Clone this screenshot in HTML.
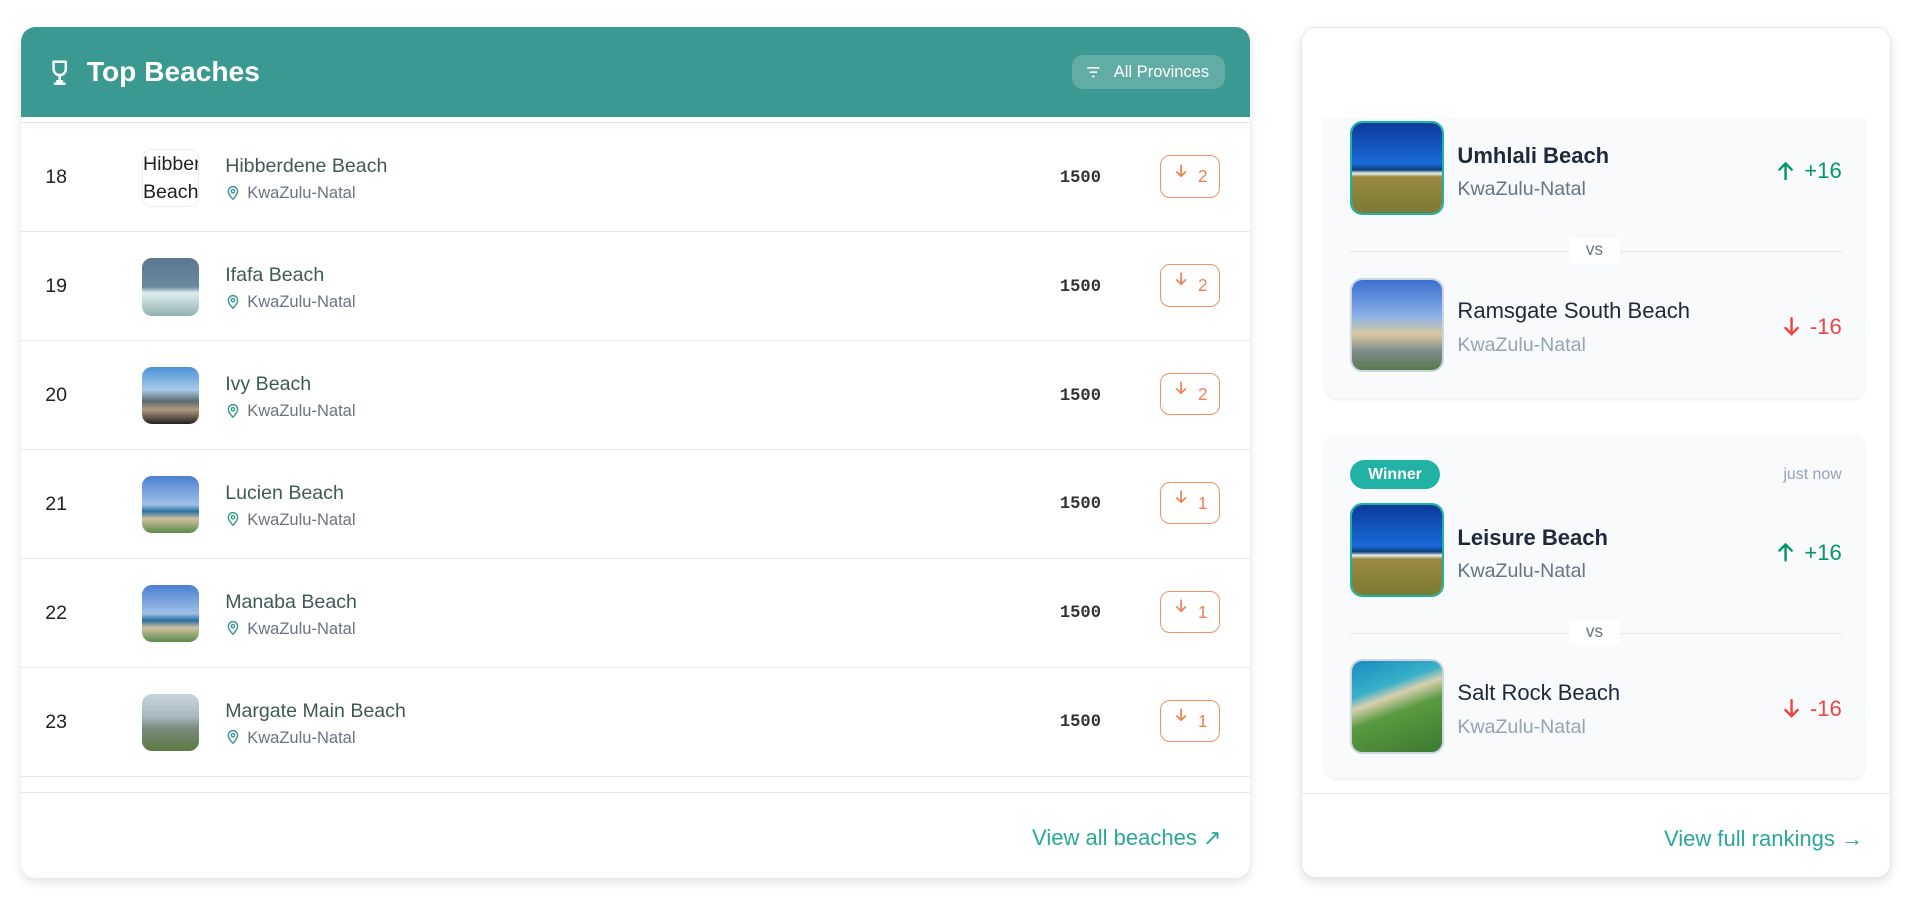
<!DOCTYPE html>
<html><head><meta charset="utf-8"><style>
html,body{margin:0;padding:0;background:#fff;overflow:hidden;width:1919px;height:901px}
#w{zoom:1.2239;width:1568px;height:736px;position:relative;font-family:"Liberation Sans",sans-serif}
.card{position:absolute;background:#fff;border-radius:12px;box-shadow:0 3px 8px rgba(0,0,0,.12);overflow:hidden}
#L{left:17px;top:22px;width:1004px;height:695px}
#hd{position:absolute;left:0;top:0;right:0;height:74px;background:#3a9990}
#hd .t{position:absolute;left:54px;top:24px;color:#fff;font-weight:bold;font-size:23px}
#pill{position:absolute;left:859px;top:23px;width:125px;height:28px;border-radius:9px;background:rgba(255,255,255,.2);color:#fff;font-size:13.5px;line-height:28px}
.row{position:absolute;left:0;right:0;height:89px;border-top:1px solid #e5e7eb}
.rk{position:absolute;left:20px;top:35px;font-size:16px;color:#222}
.im{position:absolute;left:99px;top:21px;width:47px;height:47px;border-radius:8px;overflow:hidden}
.nm{position:absolute;left:167px;top:26px;font-size:16px;color:#3f5a55}
.loc{position:absolute;left:167px;top:49px;font-size:13.5px;color:#6b7280}
.sc{position:absolute;left:849px;top:37px;font-family:"Liberation Mono",monospace;font-weight:bold;font-size:14px;color:#333}
.bd{position:absolute;left:931px;top:26px;width:47px;height:33px;border:1px solid #f4916b;border-radius:8px;color:#f07f52;font-size:14px}
.bd svg{position:absolute;left:11px;top:6px}
.bd span{position:absolute;left:30px;top:8px}
#R{left:1063px;top:22px;width:482px;height:695px;border:1px solid #e5e7eb;box-sizing:border-box}
.mc{position:absolute;left:19px;width:441px;background:#f8fafc;border-radius:10px;box-shadow:0 1px 3px rgba(0,0,0,.08)}
.pi{position:absolute;left:20px;width:74px;height:74px;border-radius:10px;border:2px solid #20b2a4;overflow:hidden}
.pi.g{border-color:#cbd5e1}
.pn{position:absolute;left:108px;font-size:18px;color:#1e293b}
.pr{position:absolute;left:108px;font-size:16px;color:#64748b}
.dl{position:absolute;right:19px;font-size:18px}
.dl svg{vertical-align:-2px;margin-right:8px}
.vs{position:absolute;left:20px;width:402px;height:1px;background:#e2e8f0}
.vs span{position:absolute;left:179px;top:-10px;width:42px;height:20px;background:#fff;text-align:center;font-size:14px;color:#64748b;line-height:18px}
.ft{position:absolute;left:0;right:0;top:625px;border-top:1px solid #e5e7eb;height:70px}
.ft a{position:absolute;right:22px;top:26px;color:#2aa79b;font-size:18px;text-decoration:none}
.sky{background:linear-gradient(#0a3a9a 0%,#1a6ad8 45%,#0b3f7a 52%,#e8f0f0 56%,#9a8a40 60%,#7b7a35 100%)}
</style></head><body><div id="w">
<div class="card" id="L">
 <div id="hd">
  <svg style="position:absolute;left:20px;top:25px" width="24" height="24" viewBox="0 0 24 24" fill="none" stroke="#fff" stroke-width="2" stroke-linecap="round" stroke-linejoin="round"><path d="M7 3h10v6a5 5 0 0 1-10 0z"/><path d="M12 14v5M8 21h8M10 19h4"/></svg>
  <div class="t">Top Beaches</div>
  <div id="pill"><svg style="position:absolute;left:11px;top:9px" width="12" height="10" viewBox="0 0 12 10" stroke="#fff" stroke-width="1.3"><path d="M1 1.5h10M3 5h6M5 8.5h2"/></svg><span style="position:absolute;left:34px">All Provinces</span></div>
 </div>
</div>
<div class="card" id="R">
 <div class="mc" style="top:40px;height:262px">
  <div class="pi" style="top:36px"><div class="sky" style="width:100%;height:100%"></div></div>
  <div class="pn" style="top:54px;font-weight:bold">Umhlali Beach</div>
  <div class="pr" style="top:83px">KwaZulu-Natal</div>
  <div class="dl" style="top:66px;color:#059669"><svg width="14" height="16" viewBox="0 0 14 16" fill="none" stroke="#059669" stroke-width="2" stroke-linecap="round"><path d="M7 15V2M2 7l5-5 5 5"/></svg>+16</div>
  <div class="vs" style="top:142px"><span>vs</span></div>
  <div class="pi g" style="top:164px"><div style="width:100%;height:100%;background:linear-gradient(#3b6fd0,#8ab0e8 40%,#d9c9a0 60%,#7a8a8a 80%,#5a7a4a)"></div></div>
  <div class="pn" style="top:181px">Ramsgate South Beach</div>
  <div class="pr" style="top:210px;color:#94a3b8">KwaZulu-Natal</div>
  <div class="dl" style="top:194px;color:#ef4444"><svg width="14" height="16" viewBox="0 0 14 16" fill="none" stroke="#ef4444" stroke-width="2" stroke-linecap="round"><path d="M7 1v13M2 9l5 5 5-5"/></svg>-16</div>
 </div>
 <div class="mc" style="top:332px;height:281px">
  <div style="position:absolute;left:20px;top:21px;width:74px;height:24px;border-radius:12px;background:#20b2a4;color:#fff;font-weight:bold;font-size:13px;text-align:center;line-height:24px">Winner</div>
  <div style="position:absolute;right:19px;top:26px;font-size:13px;color:#94a3b8">just now</div>
  <div class="pi" style="top:56px"><div class="sky" style="width:100%;height:100%"></div></div>
  <div class="pn" style="top:74px;font-weight:bold">Leisure Beach</div>
  <div class="pr" style="top:103px">KwaZulu-Natal</div>
  <div class="dl" style="top:86px;color:#059669"><svg width="14" height="16" viewBox="0 0 14 16" fill="none" stroke="#059669" stroke-width="2" stroke-linecap="round"><path d="M7 15V2M2 7l5-5 5 5"/></svg>+16</div>
  <div class="vs" style="top:162px"><span>vs</span></div>
  <div class="pi g" style="top:184px"><div style="width:100%;height:100%;background:linear-gradient(160deg,#1a8ac0,#3ab0c8 30%,#d8d0b0 40%,#5a9a40 55%,#3a7a30)"></div></div>
  <div class="pn" style="top:201px">Salt Rock Beach</div>
  <div class="pr" style="top:230px;color:#94a3b8">KwaZulu-Natal</div>
  <div class="dl" style="top:214px;color:#ef4444"><svg width="14" height="16" viewBox="0 0 14 16" fill="none" stroke="#ef4444" stroke-width="2" stroke-linecap="round"><path d="M7 1v13M2 9l5 5 5-5"/></svg>-16</div>
 </div>
 <div style="position:absolute;left:0;top:0;right:0;height:74px;background:#fff"></div>
 <div class="ft" style="background:#fff"><a>View full rankings →</a></div>
</div>
</div>
<script>
var rows=[["18","Hibberdene Beach","2",null],["19","Ifafa Beach","2","linear-gradient(#5a7890,#6a8aa0 50%,#e0eef0 60%,#90b0b0)"],["20","Ivy Beach","2","linear-gradient(#4a90d8,#a8cce8 40%,#5a6a70 60%,#b09a80 75%,#202020)"],["21","Lucien Beach","1","linear-gradient(#4a80d0,#a0c0e8 50%,#2a70a0 62%,#d0c0a0 75%,#5a8a4a)"],["22","Manaba Beach","1","linear-gradient(#4a80d0,#a0c0e8 50%,#2a70a0 62%,#d0c0a0 75%,#5a8a4a)"],["23","Margate Main Beach","1","linear-gradient(#c8d4dc,#a8b8c0 40%,#7a8a80 60%,#5a7a40)"]];
var L=document.getElementById('L');
rows.forEach(function(r,i){var d=document.createElement('div');d.className='row';d.style.top=(78+i*89)+'px';
d.innerHTML='<div class="rk">'+r[0]+'</div>'+(r[3]?'<div class="im" style="background:'+r[3]+'"></div>':'<div class="im" style="font-size:16px;line-height:23px;color:#222;border:1px solid #eee;box-sizing:border-box">Hibberdene Beach</div>')+
'<div class="nm">'+r[1]+'</div><div class="loc"><svg style="vertical-align:-2px;margin-right:5px" width="13" height="14" viewBox="0 0 24 24" fill="none" stroke="#3a9990" stroke-width="2.2"><path d="M12 22s7-6.5 7-12a7 7 0 0 0-14 0c0 5.5 7 12 7 12z"/><circle cx="12" cy="10" r="2.5"/></svg>KwaZulu-Natal</div><div class="sc">1500</div><div class="bd"><svg width="10" height="12" viewBox="0 0 10 12" fill="none" stroke="#f07f52" stroke-width="1.4" stroke-linecap="round"><path d="M5 1v9M1.5 6.5L5 10l3.5-3.5"/></svg><span>'+r[2]+'</span></div>';
L.appendChild(d);});
var e=document.createElement('div');e.className='row';e.style.top=(78+6*89)+'px';e.style.height='12px';L.appendChild(e);
var f=document.createElement('div');f.className='ft';f.innerHTML='<a style="right:23px">View all beaches ↗</a>';L.appendChild(f);
</script>
</body></html>
